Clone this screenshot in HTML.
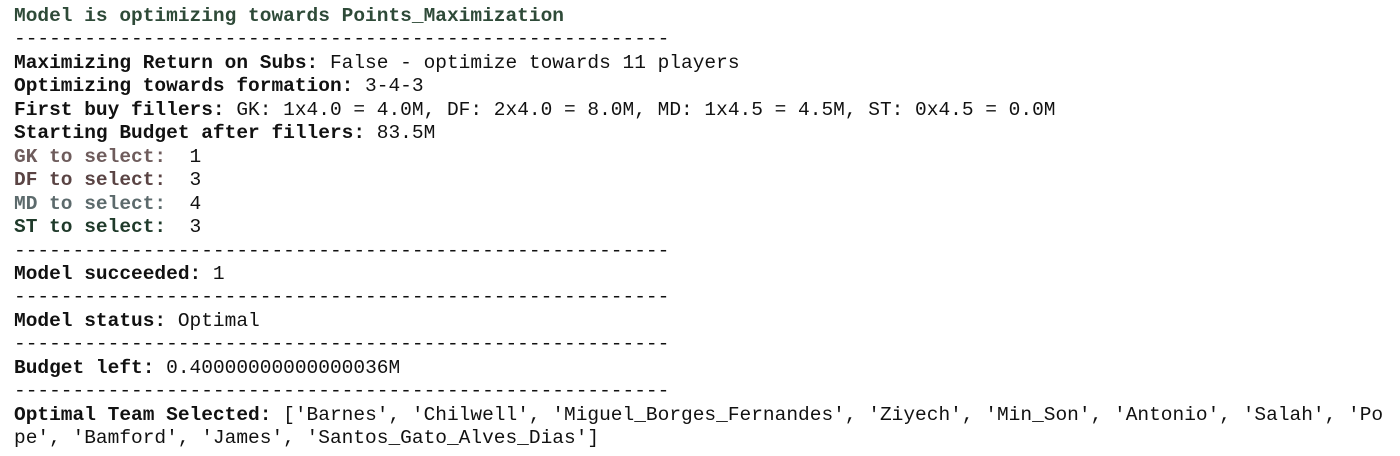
<!DOCTYPE html>
<html><head><meta charset="utf-8"><style>
html,body{margin:0;padding:0;background:#fff;width:1400px;height:456px;overflow:hidden}
pre{margin:0;position:absolute;left:14px;top:5px;font-family:"Liberation Mono",monospace;font-size:19.5px;line-height:23.45px;color:#111;white-space:pre}
b{font-weight:bold}
.g{color:#2e4a38}.gk{color:#6e5c5c}.df{color:#5a4444}.md{color:#5c6a6c}.st{color:#1f3a2a}
</style></head><body><pre><b class="g">Model is optimizing towards Points_Maximization</b>
--------------------------------------------------------
<b>Maximizing Return on Subs:</b> False - optimize towards 11 players
<b>Optimizing towards formation:</b> 3-4-3
<b>First buy fillers:</b> GK: 1x4.0 = 4.0M, DF: 2x4.0 = 8.0M, MD: 1x4.5 = 4.5M, ST: 0x4.5 = 0.0M
<b>Starting Budget after fillers:</b> 83.5M
<b class="gk">GK to select:</b>  1
<b class="df">DF to select:</b>  3
<b class="md">MD to select:</b>  4
<b class="st">ST to select:</b>  3
--------------------------------------------------------
<b>Model succeeded:</b> 1
--------------------------------------------------------
<b>Model status:</b> Optimal
--------------------------------------------------------
<b>Budget left:</b> 0.40000000000000036M
--------------------------------------------------------
<b>Optimal Team Selected:</b> ['Barnes', 'Chilwell', 'Miguel_Borges_Fernandes', 'Ziyech', 'Min_Son', 'Antonio', 'Salah', 'Po
pe', 'Bamford', 'James', 'Santos_Gato_Alves_Dias']</pre></body></html>
